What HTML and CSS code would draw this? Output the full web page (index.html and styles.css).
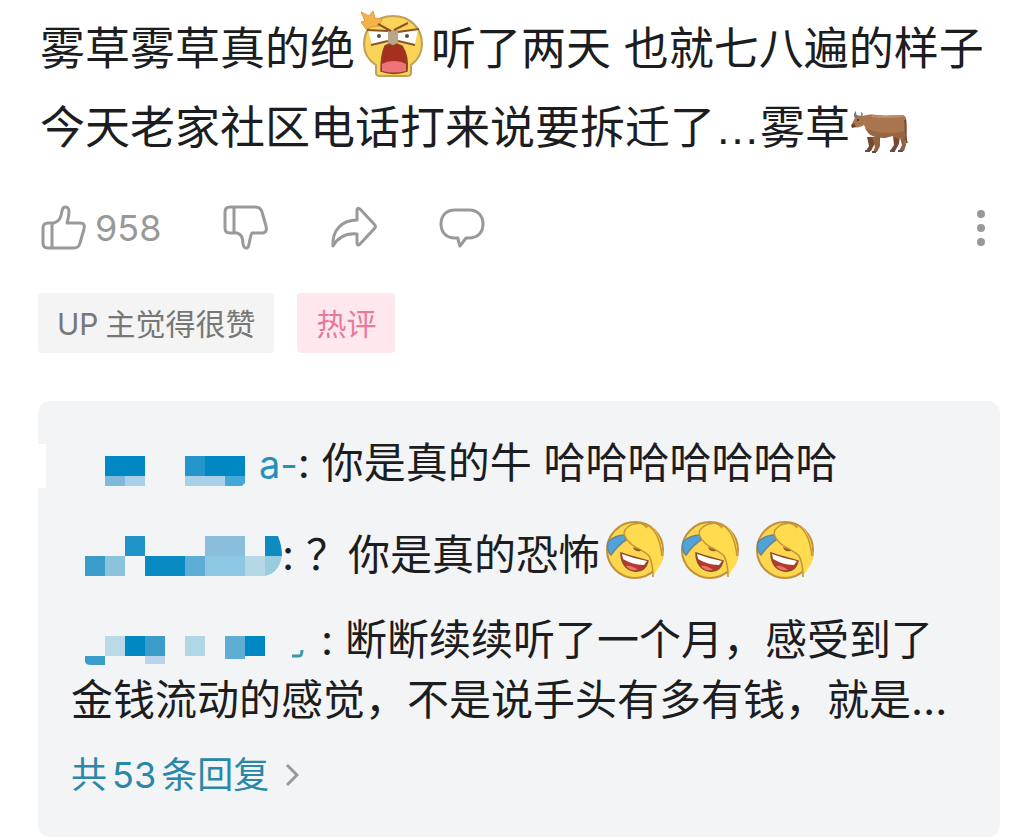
FILE: index.html
```html
<!DOCTYPE html>
<html lang="zh-CN">

<head>
  <meta charset="UTF-8" />
  <meta name="viewport" content="width=device-width, initial-scale=1.0" />
  <title>评论</title>
  <link rel="stylesheet" href="styles.css">
</head>

<body>
  <!-- 回复里重复用的表情 -->
  <svg class="defs" aria-hidden="true">
    <symbol id="laugh" viewBox="0 0 60 60">
      <circle cx="30" cy="30" r="28" fill="#fcd64f" stroke="#c2913c" stroke-width="2" />
      <path d="M3 22C8 17 13 15 20 15l1 5C16 23 11 28 6 35 2 31 2 26 3 22z" fill="#4fa3d8" stroke="#6b8590" stroke-width="1.5" />
      <path d="M20 10C24 5 31 2 40 4c11 2 17 14 18 34l-2 6-8 12c0-9-1-16-4-21-4-5-14-7-19-13-5-5-7-10-5-13z" fill="#ffdc4e" />
      <path d="M20 10c-2 3 0 8 5 13s15 8 19 13c3 5 4 12 4 21M20 10C24 5 31 2 40 4c9 3 15 14 17 32M36 4c3 0 4 1 6 4M44 5l-3 2" fill="none" stroke="#c49436" stroke-width="1.5" />
      <path d="M28 27c1 4 4 5 8 4-1-2-4-2-8-4z" fill="#96602a" />
      <path d="M16 33c8 3 17 5 27 8-2 8-7 11-14 10-8-1-13-8-13-18z" fill="#b5392f" stroke="#8c4a2a" stroke-width="1.5" />
      <path d="M17 34c8 3 16 5 25 7l-3 4c-8 0-16-3-21-6z" fill="#fff" />
      <path d="M21 46c4-1 8 1 12 4-5 1-9 0-12-4z" fill="#ee7464" />
    </symbol>
  </svg>

  <main class="comment">
    <p class="content">雾草雾草真的绝<svg class="face" viewBox="0 0 76 72" role="img" aria-label="惊恐">
        <path d="M38 6c17 0 29 12 29 28 0 9-4 16-11 21v8c0 2-2 3-4 3H25c-2 0-4-1-4-3v-8C13 50 9 43 9 34 9 18 21 6 38 6z" fill="#fad45a" stroke="#c0a056" stroke-width="2" />
        <path d="M11 19L6 12l4-1-4-9 8 4 4-5 2 7 7 1-3 7-8 1z" fill="#f3b347" stroke="#dc9b3c" stroke-width="1" />
        <path d="M13 20l21 1v11l-17 3zM43 22l20-3-3 15-17-3z" fill="#fff" />
        <path d="M33 20h10v13l-5 2-5-2z" fill="#b9a587" />
        <path d="M23 14l13 7M53 13l-14 7M12 20l21 1M43 22l21-3M16 35l17-4M43 31l17 4" fill="none" stroke="#8a5526" stroke-width="2" />
        <circle cx="24" cy="26" r="2" fill="#5e4c3c" />
        <circle cx="52" cy="26" r="2" fill="#5e4c3c" />
        <path d="M30 36l4-2 4 2 4-2 5 2c4 6 6 15 5 25-8 3-18 3-26 0 0-10 1-19 4-25z" fill="#a5301f" stroke="#8c4423" stroke-width="1.5" />
        <path d="M27 54c7-4 17-4 24 0v7c-8 2-16 2-24 0z" fill="#ee7577" />
      </svg>听了两天 也就七八遍的样子<br />今天老家社区电话打来说要拆迁了<span class="dots">…</span>雾草<svg class="cow" viewBox="0 0 60 44" role="img" aria-label="牛">
        <path d="M17 27l2 9-3 5h5l3-6 2-8zM43 26l1 9-4 6h5l4-7 1-9z" fill="#74492f" />
        <path d="M22 27l3 10-2 5h4l3-6V26zM49 24l3 11-3 6h5l2-6-2-14z" fill="#936240" />
        <path d="M4 10L6 5l6 1c5-1 9-2 14-1 10 1 19 0 27 0 3 1 4 4 3 9l-2 13c-4 3-8 1-12-1-7 2-13 2-18-1-5-2-8-5-10-10-3 2-7 3-10 2-3-1-2-4 0-7z" fill="#a8754f" />
        <path d="M15 18c3 6 6 8 11 9 6 2 11 1 16-1 5 2 9 3 12 1l1-6c-13 3-27 3-40-3z" fill="#9a6540" />
        <path d="M22 6c10 2 20 1 31 0" fill="none" stroke="#bd8e69" stroke-width="2" />
        <path d="M55 10c2 8-1 16 2 23" fill="none" stroke="#74492f" stroke-width="2" />
        <path d="M5 8C3 5 4 3 6 1c0 2 0 4 2 6M10 7c1-1 2-2 1-5 3 1 2 4 0 6" fill="#777" />
        <circle cx="8" cy="10" r="1" fill="#3b291d" />
        <path d="M1 15l3-2 2 4-4 1z" fill="#60463a" />
        <path d="M15 41h5M22 42h4M40 41h5M48 41h5" stroke="#5a504b" stroke-width="2" />
      </svg></p>

    <!-- 操作栏 -->
    <div class="actions">
      <button class="like" aria-label="点赞 958">
        <svg width="46" height="46" viewBox="0 0 46 46">
          <path d="M11 18h2c6-2 7-6 8-12 1-6 7-5 7 1 0 4-1 7-2 11h13c4 0 5 2 4 6l-4 14c-1 4-3 5-6 5H7c-4 0-5-2-5-5V23c0-4 2-5 5-5zM11 18v25" />
        </svg>
        <span>958</span>
      </button>
      <button aria-label="点踩">
        <svg width="46" height="46" viewBox="0 0 46 46">
          <path d="M11 2h21c4 0 6 1 7 5l4 14c1 4 0 7-4 7H29c-2 3-2 7-3 11-1 6-5 5-6 0 0-6-2-10-6-11H7c-4 0-5-2-5-5V7c0-4 2-5 5-5zM11 2v26" />
        </svg>
      </button>
      <button aria-label="转发">
        <svg width="46" height="46" viewBox="0 0 46 46">
          <path d="M26 5c0-2 1-2 3-1l14 15c2 2 2 3 0 5L29 39c-2 2-3 1-3-1v-9C16 28 8 31 2 41 1 25 11 15 26 15z" />
        </svg>
      </button>
      <button aria-label="回复">
        <svg width="46" height="46" viewBox="0 0 46 46">
          <path d="M16 5h14c9 0 14 6 14 14s-5 14-14 14h-3l-6 8c-1-3-2-5-2-8h-3C7 33 2 27 2 19S7 5 16 5z" />
        </svg>
      </button>
      <button class="more" aria-label="更多">
        <svg width="10" height="46" viewBox="0 0 10 46">
          <circle cx="5" cy="9" r="4" />
          <circle cx="5" cy="23" r="4" />
          <circle cx="5" cy="37" r="4" />
        </svg>
      </button>
    </div>

    <div class="tags">
      <span class="tag"><span class="up">UP</span>主觉得很赞</span>
      <span class="tag hot">热评</span>
    </div>

    <!-- 回复列表 -->
    <section class="replies">
      <p class="reply"><svg class="mask" width="188" height="60" role="img" aria-label="用户名已打码">
          <path d="M34 23h40v20H34zM134 23h40v20h-40z" fill="#0088c4" />
          <path d="M114 23h20v20h-20z" fill="#2596cb" />
          <path d="M34 43h20v10H34z" fill="#7fb8da" />
          <path d="M54 43h20v10H54zM114 43h40v10h-40z" fill="#a9d0e6" />
          <path d="M154 43h20v7l-3 3h-17z" fill="#45a9d8" />
        </svg><span class="name">a-</span>: 你是真的牛 哈哈哈哈哈哈哈</p>

      <p class="reply"><svg class="mask" width="211" height="60" role="img" aria-label="用户名已打码">
          <path d="M14 31h20v20H14z" fill="#3a9cc9" />
          <path d="M34 31h20v20H34z" fill="#8cc3dc" />
          <path d="M54 11h20v20H54z" fill="#2093c8" />
          <path d="M74 31h40v20H74z" fill="#0a8ac3" />
          <path d="M114 31h20v20h-20z" fill="#5eadd6" />
          <path d="M134 11h40v20h-40z" fill="#8abedb" />
          <path d="M134 31h40v20h-40z" fill="#8ec7e3" />
          <path d="M174 31h20v20h-20z" fill="#b5d7e6" />
          <path d="M194 11h13q4 10 4 20h-17z" fill="#108bc2" />
          <path d="M194 31h17q-3 17-17 20z" fill="#9accdf" />
        </svg>: ？你是真的恐怖<svg class="laugh" role="img" aria-label="笑哭"><use href="#laugh" /></svg><svg class="laugh" role="img" aria-label="笑哭"><use href="#laugh" /></svg><svg class="laugh" role="img" aria-label="笑哭"><use href="#laugh" /></svg></p>

      <p class="reply long"><svg class="mask" width="250" height="60" role="img" aria-label="用户名已打码">
          <path d="M34 26h20v20H34z" fill="#bbdae7" />
          <path d="M54 26h20v20H54zM174 26h20v20h-20z" fill="#0088c4" />
          <path d="M74 26h20v20H74z" fill="#3a9cc9" />
          <path d="M14 46h20v9H20q-6 0-6-4z" fill="#3a9ecb" />
          <path d="M74 46h20v8H74z" fill="#bbd3ea" />
          <path d="M114 26h20v20h-20z" fill="#b0d6e5" />
          <path d="M154 26h20v23h-20z" fill="#5eadd2" />
          <path d="M221 46h7q3 0 3-6" fill="none" stroke="#3e97a8" stroke-width="3" />
        </svg>: 断断续续听了一个月，感受到了<br />金钱流动的感觉，不是说手头有多有钱，就是…</p>

      <a class="all" href="#"><span>共<span class="num">53</span>条回复</span><svg width="14" height="24" viewBox="0 0 14 24" aria-hidden="true">
          <path d="M2 2l10 10L2 22" />
        </svg></a>
    </section>
  </main>
</body>

</html>
```
FILE: styles.css
```css
* {
  margin: 0;
  padding: 0;
  box-sizing: border-box;
}

body {
  background: #fff;
  color: #1c1d20;
  font-family: Inter, "Noto Sans CJK SC", sans-serif;
}

.defs {
  display: none;
}

.comment {
  padding: 9px 32px 0 38px;
}

.content {
  padding-left: 2px;
  font-size: 45px;
  line-height: 79px;
}

.content svg {
  vertical-align: middle;
}

.face {
  width: 76px;
  height: 72px;
  margin: -14px 0 0;
}

.dots {
  font-family: "Liberation Sans", sans-serif;
  line-height: 1;
}

.cow {
  width: 60px;
  height: 44px;
}

/* 操作栏 */
.actions {
  display: flex;
  align-items: center;
  gap: 62px;
  margin-top: 38px;
  padding: 0 14px 0 3px;
}

.actions button {
  display: flex;
  align-items: center;
  border: none;
  background: none;
  color: #999;
  font-family: inherit;
  font-size: 36px;
  line-height: 46px;
  cursor: pointer;
}

.actions svg {
  overflow: visible;
  fill: none;
  stroke: #999;
  stroke-width: 3;
  stroke-linejoin: round;
}

.actions .like {
  gap: 8px;
}

.actions .more {
  margin-left: auto;
}

.actions .more svg {
  fill: #999;
  stroke: none;
}

/* 标签 */
.tags {
  display: flex;
  gap: 23px;
  margin-top: 42px;
}

.tag {
  padding: 2px 19px 0;
  border-radius: 4px;
  background: #f4f4f4;
  color: #777;
  font-size: 30px;
  line-height: 58px;
}

.tag.hot {
  background: #fee8ee;
  color: #e67a9e;
}

.up {
  margin-right: 7px;
}

/* 回复列表 */
.replies {
  position: relative;
  margin-top: 48px;
  padding: 32px 16px 32px 33px;
  border-radius: 12px;
  background: #f2f4f6;
}

.replies::before {
  content: "";
  position: absolute;
  left: 0;
  top: 43px;
  width: 8px;
  height: 44px;
  background: #fff;
}

.reply {
  margin-bottom: 32px;
  font-size: 42px;
  line-height: 60px;
}

.reply + .long {
  margin-top: -7px;
  margin-bottom: 15px;
}

.mask {
  vertical-align: top;
}

.name {
  color: #2790b8;
  font-size: 38px;
  line-height: 1;
}

.laugh {
  width: 60px;
  height: 60px;
  margin: -5px 10px 0 5px;
  vertical-align: top;
}

.all {
  display: inline-flex;
  align-items: center;
  gap: 16px;
  color: #2b87a6;
  font-size: 36px;
  line-height: 60px;
  text-decoration: none;
}

.num {
  margin: 0 5px;
}

.all svg {
  fill: none;
  stroke: #999;
  stroke-width: 3;
}
```
